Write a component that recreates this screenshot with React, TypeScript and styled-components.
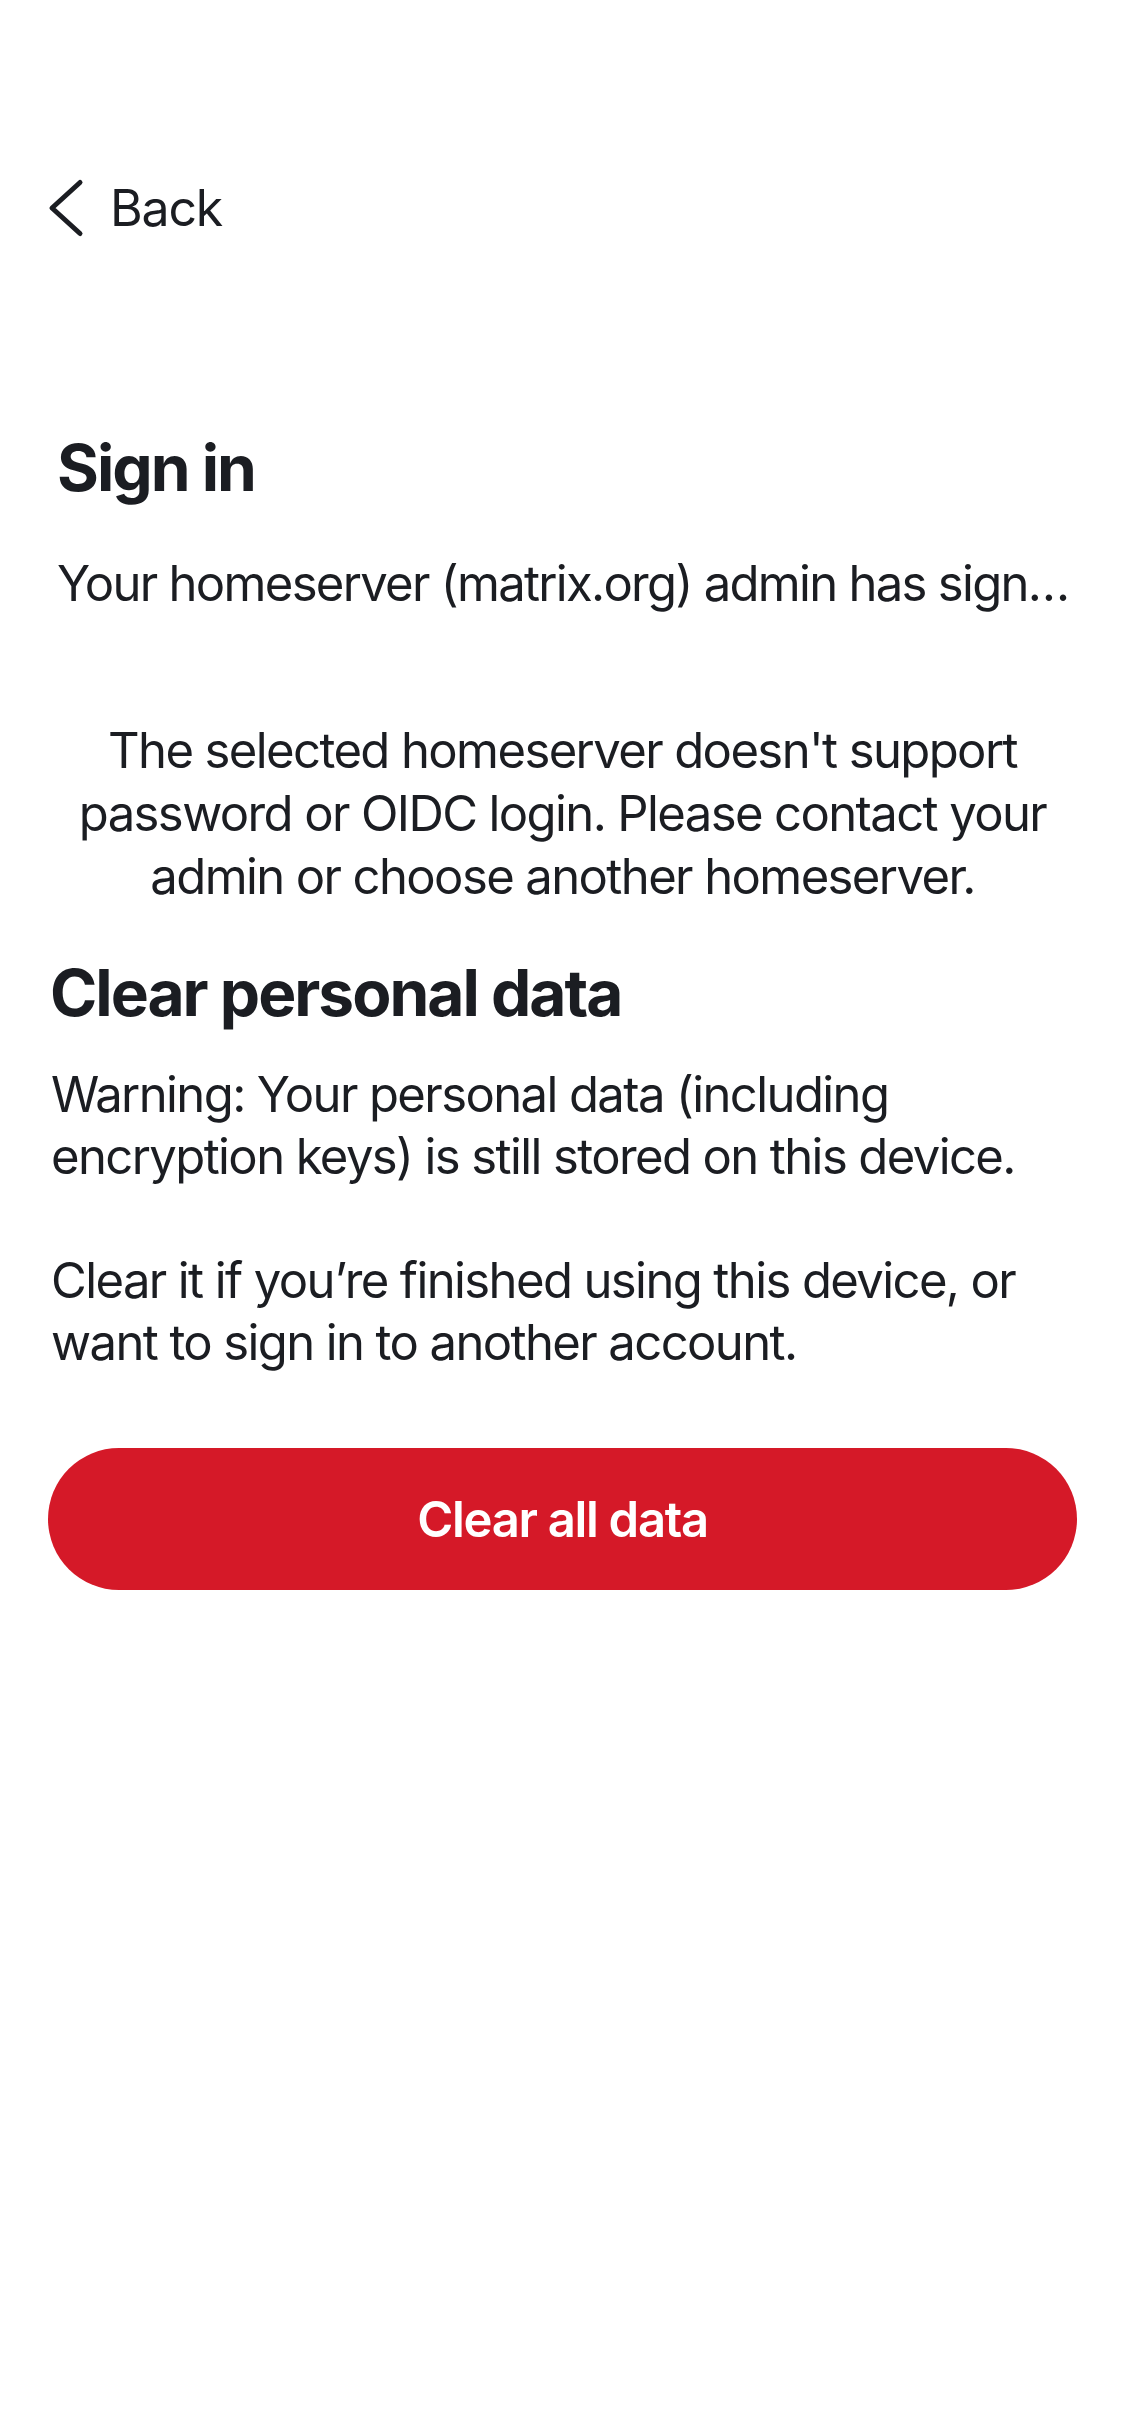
import styled, { createGlobalStyle } from 'styled-components'

const GlobalStyle = createGlobalStyle`
    body{
        margin: 0;
        background: #ffffff;
        font-family: Inter, "Noto Sans", "Liberation Sans", sans-serif;
        color: #1b1d22;
        -webkit-font-smoothing: antialiased;
    }
`

const ChevronLeft = () => (
    <svg width="40" height="60" viewBox="0 0 40 60" fill="none">
        <path d="M32 4.5 L4 30 L32 55.5" stroke="#1b1d22" strokeWidth="5" strokeLinecap="round" strokeLinejoin="round" />
    </svg>
)

export default function App() {
    return (
        <Page>
            <GlobalStyle />
            <NavBar>
                <BackButton type="button">
                    <ChevronLeft />
                    <span>Back</span>
                </BackButton>
            </NavBar>

            <SignInSection>
                <Title>Sign in</Title>
                <Subtitle>Your homeserver (matrix.org) admin has signed you out of your account</Subtitle>
            </SignInSection>

            <Notice>
                The selected homeserver doesn't support password or OIDC login. Please contact your admin or choose another homeserver.
            </Notice>

            <ClearSection>
                <SectionTitle>Clear personal data</SectionTitle>
                <Body>
                    Warning: Your personal data (including encryption keys) is still stored on this device.
                    {'\n\n'}
                    Clear it if you’re finished using this device, or want to sign in to another account.
                </Body>
                <DangerButton type="button">Clear all data</DangerButton>
            </ClearSection>
        </Page>
    )
}

const Page = styled.div`
    width: 1125px;
    min-height: 2436px;
    background: #ffffff;
`

const NavBar = styled.header`
    display: flex;
    align-items: center;
    padding: 177px 0 0 48px;
    height: 62px;
`

const BackButton = styled.button`
    display: flex;
    align-items: center;
    gap: 22px;
    border: none;
    background: none;
    padding: 0;
    font-family: inherit;
    font-size: 50px;
    line-height: 62px;
    color: #1b1d22;
    letter-spacing: -1.2px;
    cursor: pointer;
`

const SignInSection = styled.section`
    display: flex;
    flex-direction: column;
    padding: 0 50px 0 57px;
    margin-top: 189px;
`

const Title = styled.h1`
    margin: 0;
    font-size: 64px;
    line-height: 80px;
    font-weight: 700;
    letter-spacing: -2px;
`

const Subtitle = styled.p`
    margin: 45px 0 0;
    font-size: 49px;
    line-height: 62px;
    letter-spacing: -1.7px;
    white-space: nowrap;
    overflow: hidden;
    text-overflow: ellipsis;
`

const Notice = styled.p`
    margin: 104px 48px 0;
    font-size: 49px;
    line-height: 63px;
    letter-spacing: -1.6px;
    text-align: center;
`

const ClearSection = styled.section`
    display: flex;
    flex-direction: column;
    padding: 0 48px;
`

const SectionTitle = styled.h2`
    margin: 46px 0 0;
    padding-left: 2px;
    font-size: 64px;
    line-height: 78px;
    font-weight: 700;
    letter-spacing: -2px;
`

const Body = styled.p`
    margin: 32px 0 0;
    padding-left: 3px;
    font-size: 49px;
    line-height: 62px;
    letter-spacing: -1.6px;
    white-space: pre-line;
`

const DangerButton = styled.button`
    margin-top: 74px;
    height: 142px;
    width: 100%;
    border: none;
    border-radius: 71px;
    background: #d51928;
    color: #ffffff;
    font-family: inherit;
    font-size: 49px;
    font-weight: 600;
    letter-spacing: -1.3px;
    cursor: pointer;
`
